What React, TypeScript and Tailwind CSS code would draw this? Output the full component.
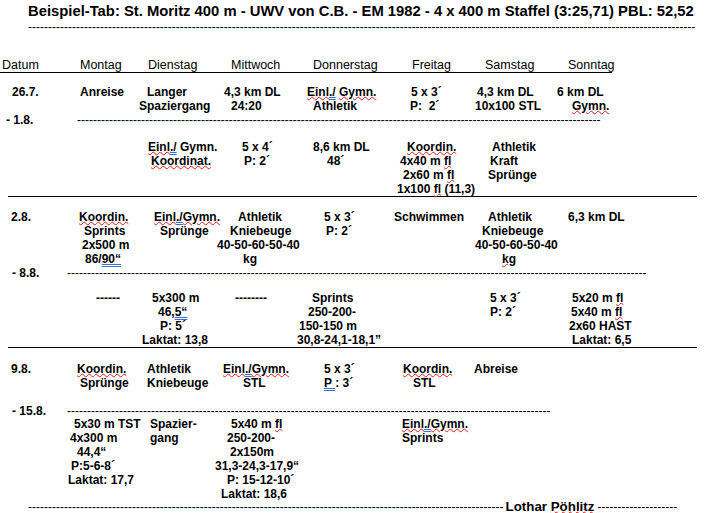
import type { ReactNode } from 'react'

const COLS = 'grid grid-cols-[64px_72px_74px_84px_92px_80px_84px_1fr]'

function W({ children }: { children: ReactNode }) {
  return <span className="underline decoration-wavy decoration-[#e02020] decoration-1 underline-offset-0">{children}</span>
}

function B({ children }: { children: ReactNode }) {
  return <span className="underline decoration-double decoration-[#3a6fd8] decoration-1 underline-offset-[1px]">{children}</span>
}

function Ln({ pl, children }: { pl: string; children: ReactNode }) {
  return <div className={`h-[14px] ${pl}`}>{children}</div>
}

function Dash({ n, className = '' }: { n: number; className?: string }) {
  return <div className={`font-normal text-[12px] ${className}`}>{'-'.repeat(n)}</div>
}

export default function App() {
  return (
    <div className="w-[705px] h-[513px] overflow-hidden bg-white text-black font-['Liberation_Sans',Arial,sans-serif] font-bold text-[12px] leading-[14px] whitespace-pre">
      <div className="pt-[2px] pl-[28px] text-[14.8px] leading-[18px]">
        Beispiel-Tab: St. Moritz 400 m - UWV von C.B. - EM 1982 - 4 x 400 m Staffel (3:25,71) PBL: 52,52
      </div>
      <Dash n={167} className="ml-[28px]" />

      {/* Kopfzeile */}
      <div className={`${COLS} mt-[25px] w-[612px] leading-[13px] font-normal text-[12.5px] border-b border-black`}>
        <div className="pl-[2px]">Datum</div>
        <div className="pl-[16px]">Montag</div>
        <div className="pl-[12px]">Dienstag</div>
        <div className="pl-[21px]">Mittwoch</div>
        <div className="pl-[19px]">Donnerstag</div>
        <div className="pl-[26px]">Freitag</div>
        <div className="pl-[19px]">Samstag</div>
        <div className="pl-[18px]">Sonntag</div>
      </div>

      {/* 26.7. - 1.8. */}
      <div className={`${COLS} mt-[12px]`}>
        <div><Ln pl="pl-[12px]">26.7.</Ln></div>
        <div><Ln pl="pl-[16px]">Anreise</Ln></div>
        <div>
          <Ln pl="pl-[11px]">Langer</Ln>
          <Ln pl="pl-[3px]">Spaziergang</Ln>
        </div>
        <div>
          <Ln pl="pl-[14px]">4,3 km DL</Ln>
          <Ln pl="pl-[21px]">24:20</Ln>
        </div>
        <div>
          <Ln pl="pl-[13px]"><W>Einl</W><B>./</B> <W>Gymn.</W></Ln>
          <Ln pl="pl-[19px]">Athletik</Ln>
        </div>
        <div>
          <Ln pl="pl-[25px]">5 x 3´</Ln>
          <Ln pl="pl-[24px]">P:  2´</Ln>
        </div>
        <div>
          <Ln pl="pl-[11px]">4,3 km DL</Ln>
          <Ln pl="pl-[9px]">10x100 STL</Ln>
        </div>
        <div>
          <Ln pl="pl-[7px]">6 km DL</Ln>
          <Ln pl="pl-[22px]"><W>Gymn.</W></Ln>
        </div>
      </div>
      <div className="flex">
        <div className="w-[77px] pl-[6px]">- 1.8.</div>
        <Dash n={131} />
      </div>

      <div className={`${COLS} mt-[13px]`}>
        <div />
        <div />
        <div>
          <Ln pl="pl-[12px]"><W>Einl</W><B>./</B> Gymn.</Ln>
          <Ln pl="pl-[15px]"><W>Koordinat.</W></Ln>
        </div>
        <div>
          <Ln pl="pl-[32px]">5 x 4´</Ln>
          <Ln pl="pl-[34px]">P: 2´</Ln>
        </div>
        <div>
          <Ln pl="pl-[19px]">8,6 km DL</Ln>
          <Ln pl="pl-[33px]">48´</Ln>
        </div>
        <div>
          <Ln pl="pl-[21px]"><W>Koordin.</W></Ln>
          <Ln pl="pl-[14px]">4x40 m <W>fl</W></Ln>
          <Ln pl="pl-[17px]">2x60 m <W>fl</W></Ln>
          <Ln pl="pl-[11px]">1x100 <W>fl</W> (11,3)</Ln>
        </div>
        <div>
          <Ln pl="pl-[26px]">Athletik</Ln>
          <Ln pl="pl-[24px]">Kraft</Ln>
          <Ln pl="pl-[22px]">Sprünge</Ln>
        </div>
        <div />
      </div>
      <div className="ml-[8px] w-[689px] h-px bg-black" />

      {/* 2.8. - 8.8. */}
      <div className={`${COLS} mt-[13px]`}>
        <div><Ln pl="pl-[11px]">2.8.</Ln></div>
        <div>
          <Ln pl="pl-[15px]"><W>Koordin.</W></Ln>
          <Ln pl="pl-[20px]">Sprints</Ln>
          <Ln pl="pl-[18px]">2x500 m</Ln>
          <Ln pl="pl-[21px]">86/<B>90“</B></Ln>
        </div>
        <div>
          <Ln pl="pl-[18px]"><W>Einl</W><B>./</B><W>Gymn.</W></Ln>
          <Ln pl="pl-[24px]">Sprünge</Ln>
        </div>
        <div>
          <Ln pl="pl-[28px]">Athletik</Ln>
          <Ln pl="pl-[20px]">Kniebeuge</Ln>
          <Ln pl="pl-[7px]">40-50-60-50-40</Ln>
          <Ln pl="pl-[33px]">kg</Ln>
        </div>
        <div>
          <Ln pl="pl-[30px]">5 x 3´</Ln>
          <Ln pl="pl-[32px]">P: 2´</Ln>
        </div>
        <div><Ln pl="pl-[8px]">Schwimmen</Ln></div>
        <div>
          <Ln pl="pl-[22px]">Athletik</Ln>
          <Ln pl="pl-[16px]">Kniebeuge</Ln>
          <Ln pl="pl-[9px]">40-50-60-50-40</Ln>
          <Ln pl="pl-[36px]"><W>kg</W></Ln>
        </div>
        <div><Ln pl="pl-[18px]">6,3 km DL</Ln></div>
      </div>
      <div className="flex">
        <div className="w-[67px] pl-[12px]">- 8.8.</div>
        <Dash n={145} />
      </div>

      <div className={`${COLS} mt-[11px]`}>
        <div />
        <div><Ln pl="pl-[32px]">------</Ln></div>
        <div>
          <Ln pl="pl-[16px]">5x300 m</Ln>
          <Ln pl="pl-[22px]">46,<B>5“</B></Ln>
          <Ln pl="pl-[24px]">P: 5´</Ln>
          <Ln pl="pl-[6px]">Laktat: 13,8</Ln>
        </div>
        <div><Ln pl="pl-[25px]">--------</Ln></div>
        <div>
          <Ln pl="pl-[18px]">Sprints</Ln>
          <Ln pl="pl-[14px]">250-200-</Ln>
          <Ln pl="pl-[5px]">150-150 m</Ln>
          <Ln pl="pl-[3px]">30,8-24,1-18,1”</Ln>
        </div>
        <div />
        <div>
          <Ln pl="pl-[24px]">5 x 3´</Ln>
          <Ln pl="pl-[24px]">P: 2´</Ln>
        </div>
        <div>
          <Ln pl="pl-[22px]">5x20 m <W>fl</W></Ln>
          <Ln pl="pl-[21px]">5x40 m <W>fl</W></Ln>
          <Ln pl="pl-[19px]">2x60 HAST</Ln>
          <Ln pl="pl-[22px]">Laktat: 6,5</Ln>
        </div>
      </div>
      <div className="ml-[8px] w-[689px] h-px bg-black" />

      {/* 9.8. - 15.8. */}
      <div className={`${COLS} mt-[14px]`}>
        <div><Ln pl="pl-[11px]">9.8.</Ln></div>
        <div>
          <Ln pl="pl-[13px]"><W>Koordin.</W></Ln>
          <Ln pl="pl-[16px]">Sprünge</Ln>
        </div>
        <div>
          <Ln pl="pl-[11px]">Athletik</Ln>
          <Ln pl="pl-[11px]">Kniebeuge</Ln>
        </div>
        <div>
          <Ln pl="pl-[13px]"><W>Einl</W><B>./</B><W>Gymn.</W></Ln>
          <Ln pl="pl-[33px]">STL</Ln>
        </div>
        <div>
          <Ln pl="pl-[30px]">5 x 3´</Ln>
          <Ln pl="pl-[30px]"><B>P </B>: 3´</Ln>
        </div>
        <div>
          <Ln pl="pl-[17px]"><W>Koordin.</W></Ln>
          <Ln pl="pl-[27px]">STL</Ln>
        </div>
        <div><Ln pl="pl-[8px]">Abreise</Ln></div>
        <div />
      </div>
      <div className="flex mt-[16px] leading-[11px]">
        <div className="w-[67px] pl-[12px]">- 15.8.</div>
        <Dash n={121} />
      </div>

      <div className={COLS}>
        <div />
        <div>
          <Ln pl="pl-[10px]">5x30 m TST</Ln>
          <Ln pl="pl-[6px]">4x300 m</Ln>
          <Ln pl="pl-[13px]">44,4“</Ln>
          <Ln pl="pl-[7px]">P:5-6-8´</Ln>
          <Ln pl="pl-[4px]">Laktat: 17,7</Ln>
        </div>
        <div>
          <Ln pl="pl-[14px]">Spazier-</Ln>
          <Ln pl="pl-[14px]">gang</Ln>
        </div>
        <div>
          <Ln pl="pl-[21px]">5x40 m <W>fl</W></Ln>
          <Ln pl="pl-[17px]">250-200-</Ln>
          <Ln pl="pl-[20px]">2x150m</Ln>
          <Ln pl="pl-[5px]">31,3-24,3-17,9“</Ln>
          <Ln pl="pl-[17px]">P: 15-12-10´</Ln>
          <Ln pl="pl-[11px]">Laktat: 18,6</Ln>
        </div>
        <div />
        <div>
          <Ln pl="pl-[16px]"><W>Einl</W><B>./</B><W>Gymn.</W></Ln>
          <Ln pl="pl-[16px]">Sprints</Ln>
        </div>
        <div />
        <div />
      </div>

      {/* Fusszeile */}
      <div className="flex items-baseline pl-[28px] leading-[11px]">
        <Dash n={119} />
        <div className="pl-[2px] pr-[3px] text-[13.33px]">Lothar <W>Pöhlitz</W></div>
        <Dash n={20} />
      </div>
    </div>
  )
}
